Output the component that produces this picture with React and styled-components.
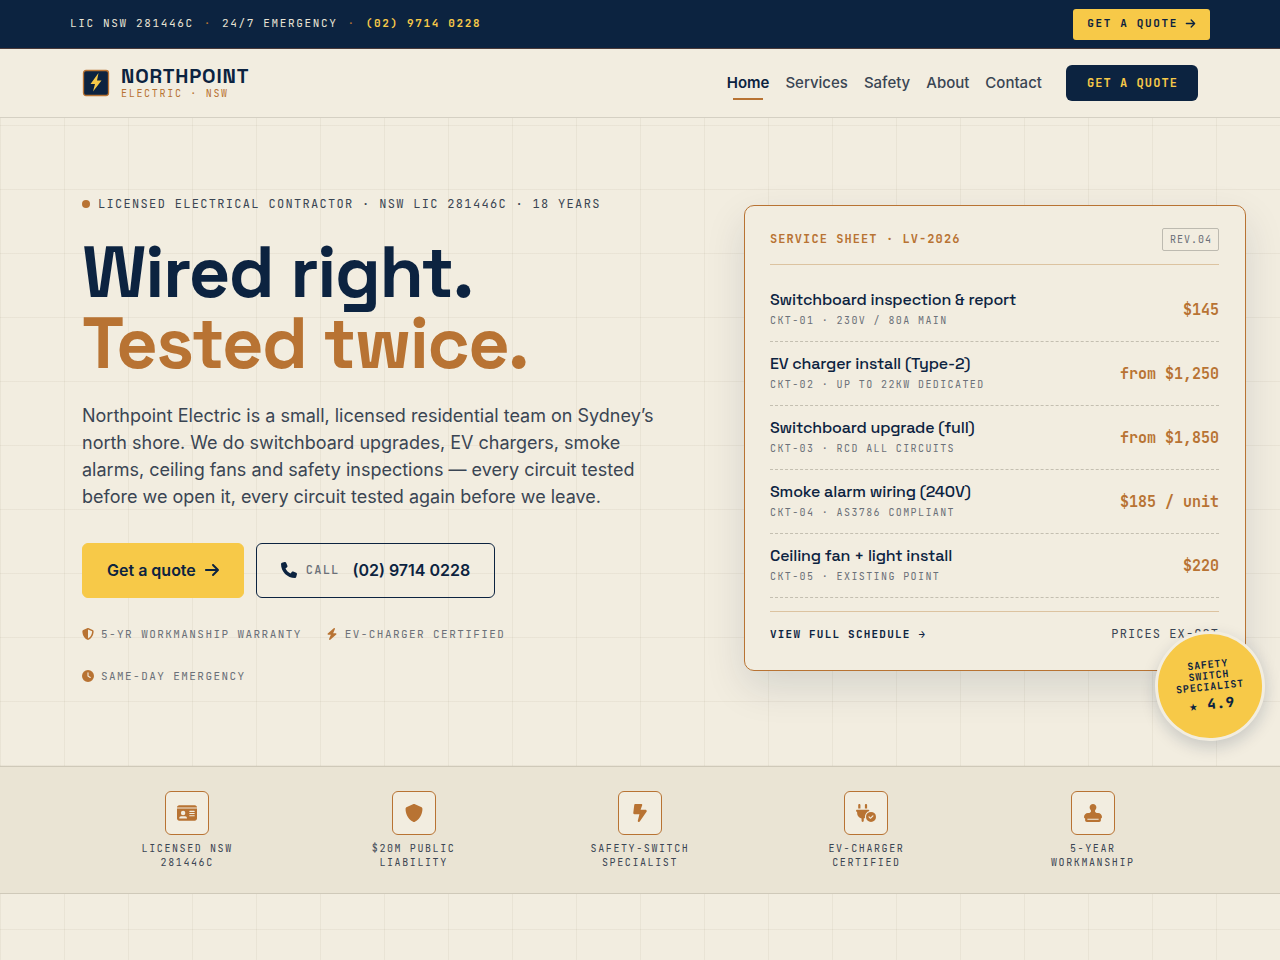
import React from "react";
import styled, { createGlobalStyle } from "styled-components";
import {
  FaArrowRight,
  FaBolt,
  FaBoltLightning,
  FaClock,
  FaIdCard,
  FaPhone,
  FaPlugCircleCheck,
  FaShield,
  FaShieldHalved,
  FaStamp,
} from "react-icons/fa6";

const navy = "#0c2340";
const copper = "#b87333";
const yellow = "#f7c948";
const cream = "#f2ede0";
const slate = "#3a4553";
const muted = "#6b7078";
const mono = `"JetBrains Mono", "DejaVu Sans Mono", monospace`;
const display = `"Space Grotesk", Inter, sans-serif`;
const gridLines = `
  linear-gradient(rgba(90, 80, 40, 0.06) 1px, transparent 1px),
  linear-gradient(90deg, rgba(90, 80, 40, 0.06) 1px, transparent 1px)
`;

const links = ["Home", "Services", "Safety", "About", "Contact"];

const services = [
  { name: "Switchboard inspection & report", code: "CKT-01 · 230V / 80A MAIN", price: "$145" },
  { name: "EV charger install (Type-2)", code: "CKT-02 · UP TO 22KW DEDICATED", price: "from $1,250" },
  { name: "Switchboard upgrade (full)", code: "CKT-03 · RCD ALL CIRCUITS", price: "from $1,850" },
  { name: "Smoke alarm wiring (240V)", code: "CKT-04 · AS3786 COMPLIANT", price: "$185 / unit" },
  { name: "Ceiling fan + light install", code: "CKT-05 · EXISTING POINT", price: "$220" },
];

const trust = [
  { icon: FaIdCard, lines: ["LICENSED NSW", "281446C"] },
  { icon: FaShield, lines: ["$20M PUBLIC", "LIABILITY"] },
  { icon: FaBoltLightning, lines: ["SAFETY-SWITCH", "SPECIALIST"] },
  { icon: FaPlugCircleCheck, lines: ["EV-CHARGER", "CERTIFIED"] },
  { icon: FaStamp, lines: ["5-YEAR", "WORKMANSHIP"] },
];

const Logo = () => (
  <svg width="28" height="28" viewBox="0 0 28 28" aria-hidden="true">
    <rect x="1.5" y="1.5" width="25" height="25" rx="2.5" fill={navy} stroke={copper} strokeWidth="1.3" />
    <path d="M16.5 4 L8.5 15 H13 L11 22.5 L19.5 11.5 H15 Z" fill={yellow} />
  </svg>
);

const App = () => (
  <>
    <GlobalStyle />
    <TopBar>
      <TopInner>
        <TopInfo>
          <span>LIC NSW 281446C</span>
          <Dot>·</Dot>
          <span>24/7 EMERGENCY</span>
          <Dot>·</Dot>
          <a href="tel:0297140228">(02) 9714 0228</a>
        </TopInfo>
        <TopQuote href="#quote">
          GET A QUOTE <FaArrowRight />
        </TopQuote>
      </TopInner>
    </TopBar>
    <Header>
      <Container>
        <HeaderRow>
          <Brand href="#home">
            <Logo />
            <BrandText>
              <strong>NORTHPOINT</strong>
              <small>ELECTRIC · NSW</small>
            </BrandText>
          </Brand>
          <Nav>
            {links.map((link, i) => (
              <NavLink key={link} href={`#${link.toLowerCase()}`} $active={i === 0}>
                {link}
              </NavLink>
            ))}
            <NavQuote href="#quote">GET A QUOTE</NavQuote>
          </Nav>
        </HeaderRow>
      </Container>
    </Header>
    <main>
      <Hero>
        <Container>
          <HeroGrid>
            <Intro>
              <Eyebrow>LICENSED ELECTRICAL CONTRACTOR · NSW LIC 281446C · 18 YEARS</Eyebrow>
              <Title>
                Wired right.
                <span>Tested twice.</span>
              </Title>
              <Lead>
                Northpoint Electric is a small, licensed residential team on Sydney’s north shore. We do switchboard
                upgrades, EV chargers, smoke alarms, ceiling fans and safety inspections — every circuit tested before we
                open it, every circuit tested again before we leave.
              </Lead>
              <Actions>
                <Primary href="#quote">
                  Get a quote <FaArrowRight />
                </Primary>
                <Call href="tel:0297140228">
                  <FaPhone />
                  <small>CALL</small>
                  (02) 9714 0228
                </Call>
              </Actions>
              <Perks>
                <li>
                  <FaShieldHalved />
                  5-YR WORKMANSHIP WARRANTY
                </li>
                <li>
                  <FaBolt />
                  EV-CHARGER CERTIFIED
                </li>
                <li>
                  <FaClock />
                  SAME-DAY EMERGENCY
                </li>
              </Perks>
            </Intro>
            <Sheet>
              <SheetHead>
                <h2>SERVICE SHEET · LV-2026</h2>
                <Revision>REV.04</Revision>
              </SheetHead>
              <ServiceList>
                {services.map((item) => (
                  <Service key={item.code}>
                    <div>
                      <h3>{item.name}</h3>
                      <p>{item.code}</p>
                    </div>
                    <Price>{item.price}</Price>
                  </Service>
                ))}
              </ServiceList>
              <SheetFoot>
                <a href="#schedule">VIEW FULL SCHEDULE →</a>
                <span>PRICES EX-GST</span>
              </SheetFoot>
              <Badge>
                <span>SAFETY</span>
                <span>SWITCH</span>
                <span>SPECIALIST</span>
                <strong>★ 4.9</strong>
              </Badge>
            </Sheet>
          </HeroGrid>
        </Container>
      </Hero>
      <TrustStrip>
        <Container>
          <TrustList>
            {trust.map(({ icon: Icon, lines }) => (
              <TrustItem key={lines[0]}>
                <IconBox>
                  <Icon />
                </IconBox>
                <span>{lines[0]}</span>
                <span>{lines[1]}</span>
              </TrustItem>
            ))}
          </TrustList>
        </Container>
      </TrustStrip>
    </main>
  </>
);

const GlobalStyle = createGlobalStyle`
  * {
    box-sizing: border-box;
  }
  body {
    margin: 0;
    min-height: 100vh;
    font-family: Inter, sans-serif;
    color: ${slate};
    background-color: ${cream};
    background-image: ${gridLines};
    background-size: 64px 64px;
    background-position: 0 33px, 0 0;
    overflow-x: hidden;
  }
  h1, h2, h3, p, ul {
    margin: 0;
    padding: 0;
  }
  ul {
    list-style: none;
  }
  a {
    text-decoration: none;
    color: inherit;
  }
  svg {
    flex-shrink: 0;
  }
`;

const Container = styled.div`
  width: 100%;
  max-width: 1140px;
  margin: 0 auto;
  padding: 0 12px;
`;

const TopBar = styled.div`
  background: ${navy};
  border-bottom: 1px solid #4a3a3a;
  font-family: ${mono};
  font-size: 11px;
  letter-spacing: 0.15em;
`;

const TopInner = styled.div`
  max-width: 1140px;
  height: 48px;
  margin: 0 auto;
  display: flex;
  justify-content: space-between;
  align-items: center;
`;

const TopInfo = styled.div`
  display: flex;
  gap: 10px;
  padding-bottom: 2px;
  color: #e9e4d5;
  a {
    color: ${yellow};
    font-weight: 600;
  }
`;

const Dot = styled.span`
  color: ${copper};
`;

const TopQuote = styled.a`
  display: flex;
  align-items: center;
  gap: 7px;
  height: 31px;
  padding: 0 14px 2px;
  border-radius: 3px;
  background: ${yellow};
  color: ${navy};
  font-weight: 700;
`;

const Header = styled.header`
  background: ${cream};
  border-bottom: 1px solid #d5d0c3;
`;

const HeaderRow = styled.div`
  height: 68px;
  display: flex;
  justify-content: space-between;
  align-items: center;
`;

const Brand = styled.a`
  display: flex;
  align-items: center;
  gap: 11px;
`;

const BrandText = styled.span`
  display: flex;
  flex-direction: column;
  padding-top: 2px;
  strong {
    font-family: ${display};
    font-size: 20px;
    font-weight: 700;
    line-height: 20px;
    letter-spacing: 0.04em;
    color: ${navy};
  }
  small {
    font-family: ${mono};
    font-size: 10px;
    line-height: 16px;
    letter-spacing: 0.17em;
    color: ${copper};
  }
`;

const Nav = styled.nav`
  display: flex;
  align-items: center;
`;

const NavLink = styled.a`
  position: relative;
  padding: 8px;
  font-size: 15px;
  line-height: 18px;
  font-weight: ${(props) => (props.$active ? 600 : 500)};
  color: ${(props) => (props.$active ? navy : slate)};
  &::after {
    content: "";
    display: ${(props) => (props.$active ? "block" : "none")};
    position: absolute;
    left: 14px;
    right: 14px;
    bottom: 0;
    height: 2px;
    background: ${copper};
  }
`;

const NavQuote = styled.a`
  margin-left: 16px;
  padding: 0 20px 0 21px;
  border-radius: 6px;
  background: ${navy};
  color: ${yellow};
  font-family: ${mono};
  font-size: 12px;
  font-weight: 700;
  line-height: 36px;
  letter-spacing: 0.09em;
`;

const Hero = styled.section`
  padding: 76px 0 81px;
  border-bottom: 1px solid #cfc9b9;
  background-color: ${cream};
  background-image: ${gridLines};
  background-size: 64px 64px;
  background-position: 0 7px, 0 0;
`;

const HeroGrid = styled.div`
  display: grid;
  grid-template-columns: minmax(0, 1fr) 502px;
  align-items: start;
  margin-right: -48px;
`;

const Intro = styled.div`
  display: flex;
  flex-direction: column;
`;

const Eyebrow = styled.p`
  display: flex;
  align-items: center;
  gap: 8px;
  font-family: ${mono};
  font-size: 12px;
  line-height: 20px;
  letter-spacing: 0.11em;
  &::before {
    content: "";
    width: 8px;
    height: 8px;
    border-radius: 50%;
    background: ${copper};
  }
`;

const Title = styled.h1`
  margin-top: 23px;
  font-family: ${display};
  font-size: 72px;
  font-weight: 700;
  line-height: 71px;
  letter-spacing: -0.02em;
  color: ${navy};
  span {
    display: block;
    color: ${copper};
  }
`;

const Lead = styled.p`
  max-width: 580px;
  margin-top: 23px;
  font-size: 18px;
  line-height: 27px;
`;

const Actions = styled.div`
  display: flex;
  gap: 12px;
  margin-top: 33px;
`;

const Button = styled.a`
  display: flex;
  align-items: center;
  height: 55px;
  padding: 0 24px 1px;
  border: 1px solid ${navy};
  border-radius: 6px;
  font-size: 16px;
  font-weight: 600;
  color: ${navy};
`;

const Primary = styled(Button)`
  gap: 8px;
  padding-right: 23px;
  border-color: ${yellow};
  background: ${yellow};
`;

const Call = styled(Button)`
  small {
    margin: 0 13px 0 9px;
    font-family: ${mono};
    font-size: 12px;
    font-weight: 500;
    letter-spacing: 0.1em;
    color: ${muted};
  }
`;

const Perks = styled.ul`
  display: flex;
  flex-wrap: wrap;
  gap: 24px;
  max-width: 580px;
  margin-top: 27px;
  font-family: ${mono};
  font-size: 11px;
  line-height: 18px;
  letter-spacing: 0.13em;
  color: ${muted};
  li {
    display: flex;
    align-items: center;
    gap: 7px;
  }
  svg {
    width: 12px;
    height: 12px;
    color: ${copper};
  }
`;

const Sheet = styled.aside`
  position: relative;
  margin-top: 11px;
  padding: 22px 26px 26px 25px;
  border: 1px solid ${copper};
  border-radius: 10px;
  background: ${cream};
  box-shadow: 0 16px 40px rgba(12, 35, 64, 0.12);
`;

const SheetHead = styled.div`
  display: flex;
  justify-content: space-between;
  align-items: center;
  padding-bottom: 13px;
  border-bottom: 1px solid #dcc3a0;
  font-family: ${mono};
  h2 {
    padding-bottom: 2px;
    font-size: 12px;
    font-weight: 700;
    letter-spacing: 0.09em;
    color: ${copper};
  }
`;

const Revision = styled.span`
  padding: 0 6px 0 7px;
  border: 1px solid #bdbab0;
  border-radius: 2px;
  font-size: 10px;
  line-height: 21px;
  letter-spacing: 0.1em;
  color: ${muted};
`;

const ServiceList = styled.ul`
  padding: 13px 0;
`;

const Service = styled.li`
  display: flex;
  justify-content: space-between;
  align-items: center;
  height: 64px;
  border-bottom: 1px dashed #c4bfb1;
  h3 {
    font-family: ${display};
    font-size: 16px;
    font-weight: 500;
    line-height: 22px;
    letter-spacing: -0.01em;
    color: ${navy};
  }
  p {
    font-family: ${mono};
    font-size: 10px;
    line-height: 20px;
    letter-spacing: 0.14em;
    color: ${muted};
  }
`;

const Price = styled.span`
  font-family: ${mono};
  font-size: 15px;
  font-weight: 600;
  color: ${copper};
`;

const SheetFoot = styled.div`
  display: flex;
  justify-content: space-between;
  align-items: center;
  padding-top: 12px;
  border-top: 1px solid #dcc3a0;
  font-family: ${mono};
  font-size: 12px;
  line-height: 20px;
  letter-spacing: 0.09em;
  a {
    font-size: 11px;
    font-weight: 700;
    letter-spacing: 0.11em;
    color: ${navy};
  }
`;

const Badge = styled.div`
  position: absolute;
  right: -20px;
  bottom: -71px;
  width: 110px;
  height: 110px;
  display: flex;
  flex-direction: column;
  align-items: center;
  justify-content: center;
  border: 3px solid ${cream};
  border-radius: 50%;
  background: ${yellow};
  box-shadow: 0 6px 16px rgba(12, 35, 64, 0.18);
  transform: rotate(-6deg);
  font-family: ${mono};
  font-size: 10px;
  font-weight: 700;
  line-height: 11px;
  letter-spacing: 0.08em;
  color: ${navy};
  strong {
    margin-top: 3px;
    font-size: 14px;
    line-height: 18px;
  }
`;

const TrustStrip = styled.section`
  padding: 24px 0 23px;
  border-bottom: 1px solid #cfc9b9;
  background: #eae4d4;
`;

const TrustList = styled.ul`
  display: grid;
  grid-template-columns: repeat(5, 1fr);
  gap: 16px;
`;

const TrustItem = styled.li`
  display: flex;
  flex-direction: column;
  align-items: center;
  font-family: ${mono};
  font-size: 10px;
  line-height: 14px;
  letter-spacing: 0.16em;
`;

const IconBox = styled.div`
  display: flex;
  align-items: center;
  justify-content: center;
  width: 44px;
  height: 44px;
  margin-bottom: 7px;
  border: 1px solid ${copper};
  border-radius: 6px;
  background: ${cream};
  color: ${copper};
  svg {
    width: 20px;
    height: 18px;
  }
`;

export default App;
